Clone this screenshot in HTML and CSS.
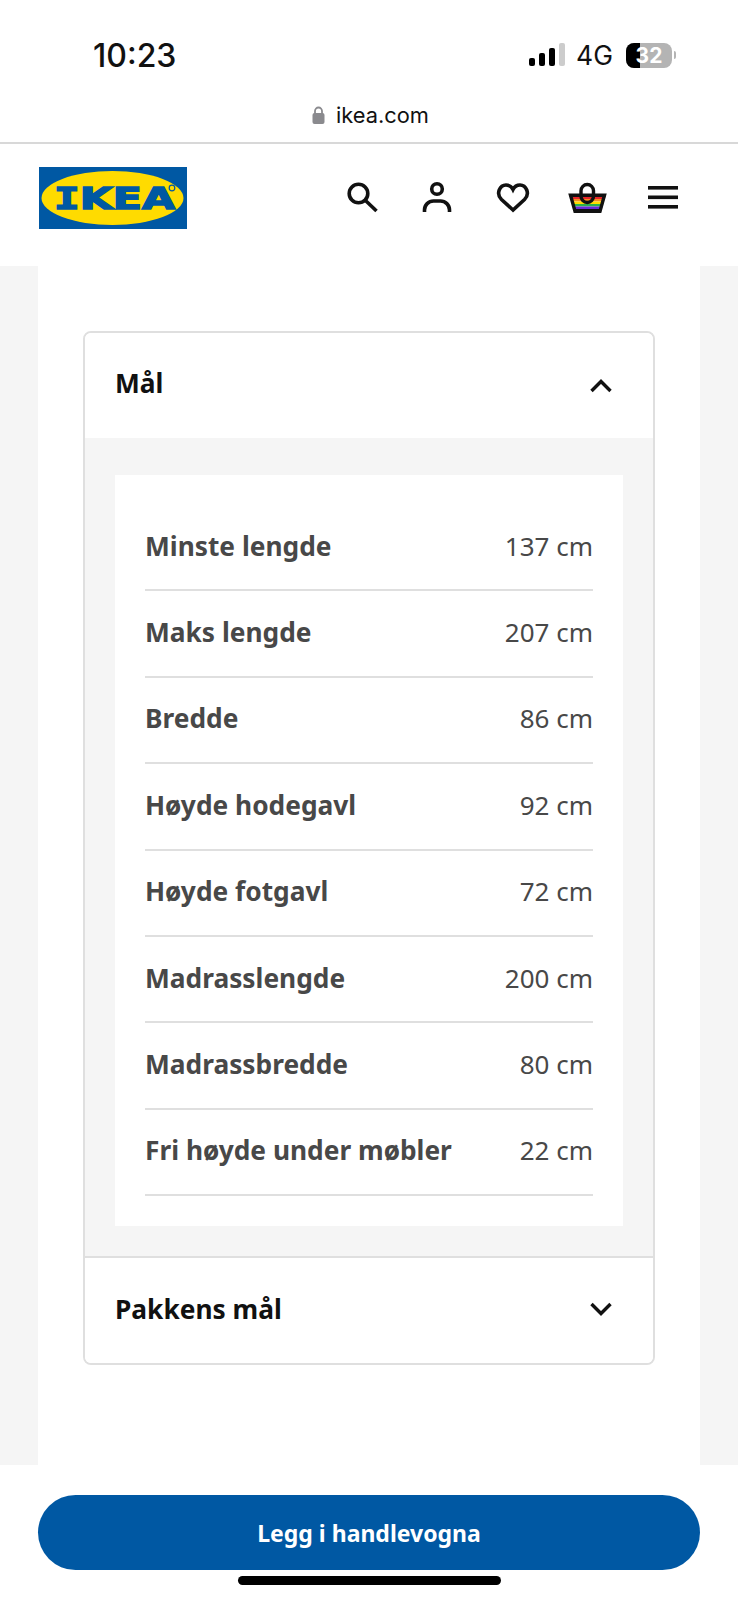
FILE: index.html
```html
<!DOCTYPE html>
<html lang="no">
<head>
  <meta charset="UTF-8" />
  <meta name="viewport" content="width=device-width, initial-scale=1.0" />
  <title>IKEA - Mål</title>
  <link rel="stylesheet" href="styles.css">
</head>
<body>
  <div class="status-bar">
    <span class="clock">10:23</span>
    <div class="status-right">
      <svg class="signal" width="36" height="24" viewBox="0 0 36 24">
        <rect x="0" y="15" width="6" height="8" rx="2" fill="#000"/>
        <rect x="10" y="10" width="6" height="13" rx="2" fill="#000"/>
        <rect x="20" y="5" width="6" height="18" rx="2" fill="#000"/>
        <rect x="30" y="0" width="6" height="23" rx="2" fill="#ccc"/>
      </svg>
      <span class="network">4G</span>
      <div class="battery"><span class="battery-fill"></span><span class="battery-num">32</span></div>
      <span class="battery-tip"></span>
    </div>
  </div>

  <div class="url-bar">
    <svg width="13" height="18" viewBox="0 0 13 18">
      <path d="M3 8V5a3.500 3.500 0 0 1 7 0v3" fill="none" stroke="#8a8a8e" stroke-width="1.800"/>
      <rect x="0.500" y="7" width="12" height="11" rx="2" fill="#8a8a8e"/>
    </svg>
    <span>ikea.com</span>
  </div>

  <header class="site-header">
    <svg class="logo" width="148" height="62" viewBox="0 0 148 62">
      <rect width="148" height="62" fill="#0058a3"/>
      <ellipse cx="73.500" cy="31" rx="71" ry="27" fill="#ffdb00"/>
      <text x="15" y="42" class="logo-text" textLength="121" lengthAdjust="spacingAndGlyphs"><tspan class="logo-i">I</tspan>KEA</text>
      <circle cx="133" cy="21" r="2.800" fill="none" stroke="#0058a3" stroke-width="1.200"/>
    </svg>
    <nav class="icons">
      <svg width="36" height="36" viewBox="0 0 36 36" fill="none" stroke="#111" stroke-width="3.600">
        <circle cx="13.500" cy="13.500" r="9.300"/>
        <path d="M20.500 20.500 31.500 31"/>
      </svg>
      <svg width="36" height="36" viewBox="0 0 36 36" fill="none" stroke="#111" stroke-width="3.600">
        <circle cx="17" cy="9" r="5.300"/>
        <path d="M4.500 32v-2a9 9 0 0 1 9-9h7a9 9 0 0 1 9 9v2"/>
      </svg>
      <svg width="36" height="36" viewBox="0 0 36 36" fill="none" stroke="#111" stroke-width="3.600">
        <path d="M18 30 6.500 19.500C.5 13.500 5 5 11 5c3 0 5.500 1.500 7 4.500 1.500-3 4-4.500 7-4.500 6 0 10.500 8.500 4.500 14.500z"/>
      </svg>
      <svg width="40" height="36" viewBox="0 0 40 36">
        <defs>
          <clipPath id="basket-clip"><path d="M2 14h37l-5 18H8z"/></clipPath>
        </defs>
        <g clip-path="url(#basket-clip)">
          <rect x="0" y="14" width="42" height="4" fill="#111"/>
          <rect x="0" y="16" width="42" height="3" fill="#e8262a"/>
          <rect x="0" y="19" width="42" height="2.500" fill="#f58a1f"/>
          <rect x="0" y="21.500" width="42" height="2.500" fill="#ffdb00"/>
          <rect x="0" y="24" width="42" height="2.500" fill="#2bb24c"/>
          <rect x="0" y="26.500" width="42" height="2.500" fill="#6a2bd9"/>
          <rect x="0" y="29" width="42" height="4" fill="#111"/>
        </g>
        <path d="M3.500 15.200h34l-4.500 16H8z" fill="none" stroke="#111" stroke-width="3.400"/>
        <rect x="14" y="4.500" width="12.500" height="18" rx="6.250" fill="none" stroke="#111" stroke-width="3.400"/>
      </svg>
      <svg width="36" height="36" viewBox="0 0 36 36" fill="#111">
        <rect x="3" y="6" width="30" height="3.600"/>
        <rect x="3" y="15.500" width="30" height="3.600"/>
        <rect x="3" y="25" width="30" height="3.600"/>
      </svg>
    </nav>
  </header>

  <main class="page">
    <div class="column">
      <section class="accordion">
        <div class="acc-head">
          <h2>Mål</h2>
          <svg width="24" height="16" viewBox="0 0 24 16" fill="none" stroke="#111" stroke-width="3.400"><path d="M2.500 13 12 3.500 21.500 13"/></svg>
        </div>
        <div class="acc-body">
          <div class="measures">
            <div class="row"><span class="label">Minste lengde</span><span class="value">137 cm</span></div>
            <div class="row"><span class="label">Maks lengde</span><span class="value">207 cm</span></div>
            <div class="row"><span class="label">Bredde</span><span class="value">86 cm</span></div>
            <div class="row"><span class="label">Høyde hodegavl</span><span class="value">92 cm</span></div>
            <div class="row"><span class="label">Høyde fotgavl</span><span class="value">72 cm</span></div>
            <div class="row"><span class="label">Madrasslengde</span><span class="value">200 cm</span></div>
            <div class="row"><span class="label">Madrassbredde</span><span class="value">80 cm</span></div>
            <div class="row"><span class="label">Fri høyde under møbler</span><span class="value">22 cm</span></div>
          </div>
        </div>
        <div class="acc-head acc-closed">
          <h2>Pakkens mål</h2>
          <svg width="24" height="16" viewBox="0 0 24 16" fill="none" stroke="#111" stroke-width="3.400"><path d="M2.500 3 12 12.500 21.500 3"/></svg>
        </div>
      </section>
    </div>
  </main>

  <div class="buy-bar">
    <button class="buy">Legg i handlevogna</button>
    <div class="home-bar"></div>
  </div>
</body>
</html>
```

FILE: styles.css
```css
:root {
  --text-dark: #111111;
  --text-grey: #484848;
  --line: #dfdfdf;
  --grey-bg: #f5f5f5;
  --blue: #0058a3;
  --font-main: 'Noto Sans', sans-serif;
}

* {
  margin: 0;
  padding: 0;
  box-sizing: border-box;
}

body {
  width: 738px;
  height: 1600px;
  background: #fff;
  font-family: var(--font-main);
  color: var(--text-dark);
  overflow: hidden;
}

.status-bar {
  height: 96px;
  padding: 31px 62px 0 93px;
  display: flex;
  justify-content: space-between;
  align-items: flex-start;
}

.clock {
  font-family: Inter, sans-serif;
  font-size: 32px;
  font-weight: 500;
  line-height: 50px;
}

.status-right {
  display: flex;
  align-items: center;
  height: 48px;
}

.signal {
  margin-right: 11px;
}

.network {
  font-family: Inter, sans-serif;
  font-size: 26.500px;
  line-height: 48px;
  margin-right: 13px;
}

.battery {
  position: relative;
  width: 46px;
  height: 25px;
  border-radius: 8px;
  background: #b4b4b4;
  overflow: hidden;
  display: flex;
  align-items: center;
  justify-content: center;
}

.battery-fill {
  position: absolute;
  left: 0;
  top: 0;
  bottom: 0;
  width: 14px;
  background: #000;
}

.battery-num {
  position: relative;
  font-family: Inter, sans-serif;
  font-size: 21px;
  font-weight: 700;
  color: #fff;
}

.battery-tip {
  width: 2px;
  height: 8px;
  margin-left: 2px;
  border-radius: 0 2px 2px 0;
  background: #b4b4b4;
}

.url-bar {
  height: 48px;
  border-bottom: 2px solid #d8d8d8;
  display: flex;
  align-items: flex-start;
  justify-content: center;
  gap: 11px;
  padding: 4px 0 0 3px;
  font-family: Inter, sans-serif;
  font-size: 21.800px;
  line-height: 30px;
}

.url-bar svg {
  margin-top: 6px;
}

.site-header {
  height: 122px;
  padding: 23px 0 0 39px;
  display: flex;
  justify-content: space-between;
  align-items: flex-start;
}

.logo-text {
  font-family: 'DejaVu Sans', sans-serif;
  font-weight: 700;
  font-size: 30px;
  fill: #0058a3;
  stroke: #0058a3;
  stroke-width: 1.500px;
}

.logo-i {
  font-family: 'DejaVu Sans Mono', monospace;
}

.icons {
  display: flex;
  align-items: center;
  gap: 39px;
  padding: 13px 57px 0 0;
}

.icons svg:nth-child(4) {
  margin: 0 -1px 0 -3px;
}

.page {
  height: 1199px;
  background: var(--grey-bg);
  padding: 0 38px;
}

.column {
  height: 100%;
  background: #fff;
  padding: 65px 45px 0;
}

.accordion {
  border: 2px solid var(--line);
  border-radius: 8px;
  overflow: hidden;
}

.acc-head {
  height: 105px;
  padding: 0 40px 0 30px;
  display: flex;
  justify-content: space-between;
  align-items: center;
  background: #fff;
}

.acc-head h2 {
  font-size: 26.300px;
  font-weight: 700;
  line-height: 36px;
  margin-bottom: 5px;
}

.acc-closed {
  height: 107px;
  border-top: 2px solid var(--line);
}

.acc-closed h2 {
  margin-bottom: 3px;
}

.acc-closed svg {
  margin-bottom: 3px;
}

.acc-body {
  background: var(--grey-bg);
  padding: 37px 30px 30px;
}

.measures {
  height: 751px;
  background: #fff;
  padding: 30px 30px 0;
}

.row {
  height: 86.400px;
  border-bottom: 2px solid var(--line);
  display: flex;
  justify-content: space-between;
  align-items: center;
  padding-bottom: 3px;
  color: var(--text-grey);
  font-size: 26px;
  line-height: 36px;
}

.label {
  font-size: 26.300px;
  font-weight: 700;
}

.buy-bar {
  height: 135px;
  padding: 30px 38px 0;
}

.buy {
  display: block;
  width: 100%;
  height: 75px;
  border: none;
  border-radius: 38px;
  background: var(--blue);
  color: #fff;
  font-family: var(--font-main);
  font-size: 23px;
  font-weight: 700;
}

.home-bar {
  width: 263px;
  height: 9px;
  margin: 6px auto 0;
  border-radius: 5px;
  background: #000;
}
```
